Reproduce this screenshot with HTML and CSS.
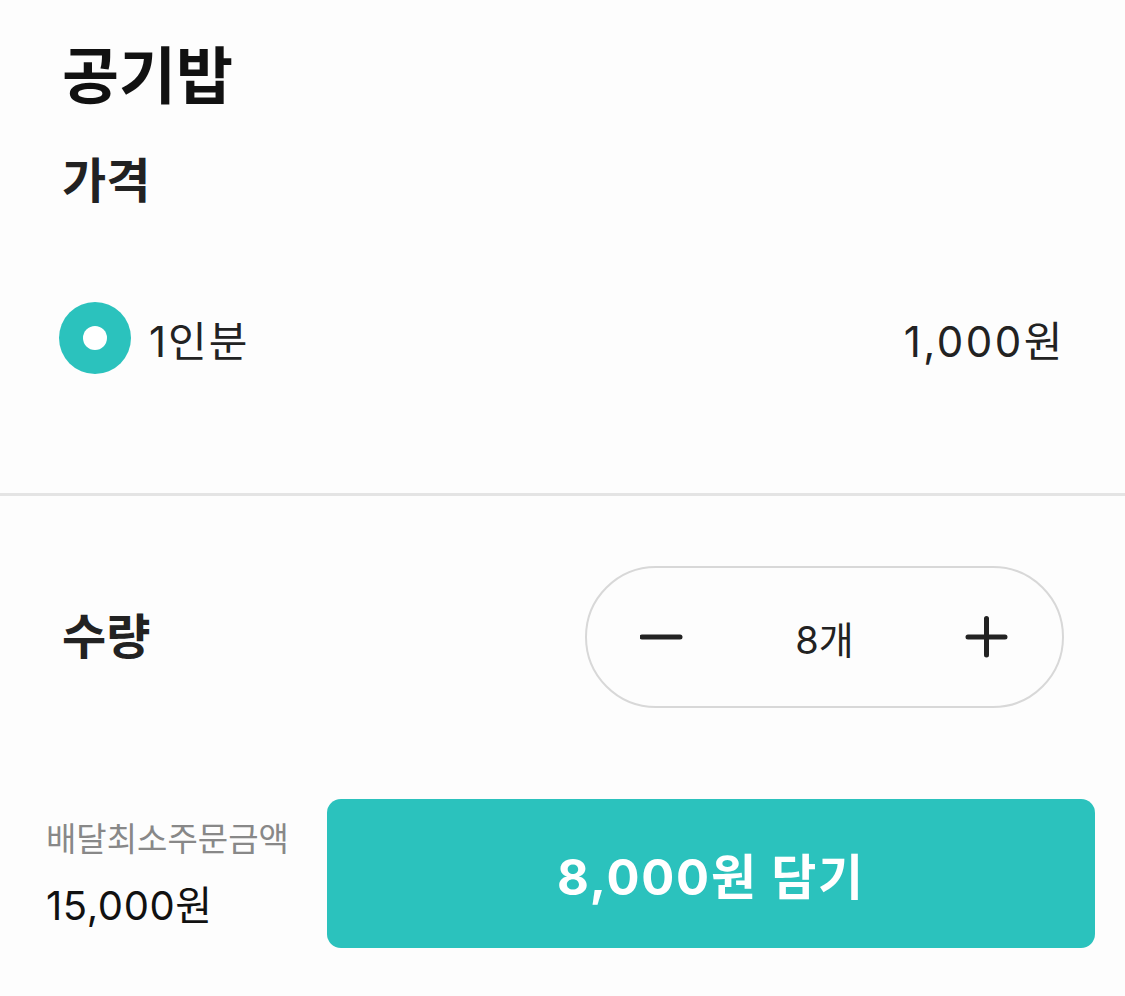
FILE: index.html
```html
<!DOCTYPE html>
<html lang="ko">
<head>
<meta charset="utf-8">
<link rel="stylesheet" href="styles.css">
</head>
<body>
<div class="page">
  <section class="menu">
    <h1 class="title">공기밥</h1>
    <h2 class="section-title">가격</h2>
    <div class="option">
      <span class="radio"><span class="radio-dot"></span></span>
      <span class="option-name">1인분</span>
      <span class="option-price">1,000원</span>
    </div>
  </section>
  <div class="divider"></div>
  <section class="qty">
    <h2 class="section-title">수량</h2>
    <div class="stepper">
      <svg class="step-icon" width="44" height="44" viewBox="0 0 44 44"><path d="M2 22H40" stroke="#222" stroke-width="5" stroke-linecap="round" fill="none"/></svg>
      <span class="count">8개</span>
      <svg class="step-icon" width="44" height="44" viewBox="0 0 44 44"><path d="M3 22H40M21.5 3.5V40" stroke="#222" stroke-width="5" stroke-linecap="round" fill="none"/></svg>
    </div>
  </section>
  <footer class="footer">
    <div class="min-order">
      <div class="min-label">배달최소주문금액</div>
      <div class="min-value">15,000원</div>
    </div>
    <button class="add-btn">8,000원 담기</button>
  </footer>
</div>
</body>
</html>
```
FILE: styles.css
```css
html, body {
  margin: 0;
  padding: 0;
  background: #fdfdfd;
}
body {
  font-family: Inter, "Noto Sans CJK KR", sans-serif;
  color: #222;
}
.page {
  width: 1125px;
  height: 996px;
  overflow: hidden;
}
.menu {
  padding: 37px 62px 0 62px;
}
.title {
  margin: 0;
  font-size: 62px;
  line-height: 80px;
  font-weight: 700;
  color: #111;
}
.section-title {
  margin: 0;
  font-size: 48px;
  line-height: 60px;
  font-weight: 700;
  color: #222;
}
.menu .section-title {
  margin-top: 34px;
}
.option {
  margin-top: 77px;
  height: 100px;
  display: flex;
  align-items: center;
}
.radio {
  width: 72px;
  height: 72px;
  margin-left: -3px;
  border-radius: 50%;
  background: #2bc2bd;
  display: flex;
  align-items: center;
  justify-content: center;
}
.radio-dot {
  width: 24px;
  height: 24px;
  border-radius: 50%;
  background: #fff;
}
.option-name {
  margin-left: 18px;
  font-size: 42px;
  letter-spacing: 2px;
  flex: 1;
}
.option-price {
  font-size: 42px;
  letter-spacing: 2.5px;
  margin-right: -2px;
}
.divider {
  margin-top: 105px;
  height: 3px;
  background: #e4e4e4;
}
.qty {
  margin-top: 70px;
  padding: 0 61px 0 62px;
  display: flex;
  align-items: center;
  justify-content: space-between;
}
.stepper {
  width: 475px;
  height: 138px;
  border: 2px solid #d8d8d8;
  border-radius: 71px;
  box-sizing: content-box;
  display: flex;
  align-items: center;
  justify-content: space-between;
}
.step-icon {
  margin: 0 53px;
}
.count {
  font-size: 38px;
}
.footer {
  margin-top: 91px;
  padding: 0 30px 0 46px;
  display: flex;
  align-items: center;
}
.min-order {
  width: 281px;
  flex-shrink: 0;
}
.min-label {
  font-size: 33px;
  line-height: 44px;
  color: #888;
}
.min-value {
  margin-top: 20px;
  font-size: 40px;
  line-height: 50px;
  letter-spacing: 0.6px;
  color: #111;
}
.add-btn {
  flex: 1;
  height: 149px;
  border: none;
  border-radius: 14px;
  background: #2bc2bd;
  color: #fff;
  font-family: Inter, "Noto Sans CJK KR", sans-serif;
  font-size: 49px;
  font-weight: 700;
  letter-spacing: 1.8px;
  padding: 0;
}
```
